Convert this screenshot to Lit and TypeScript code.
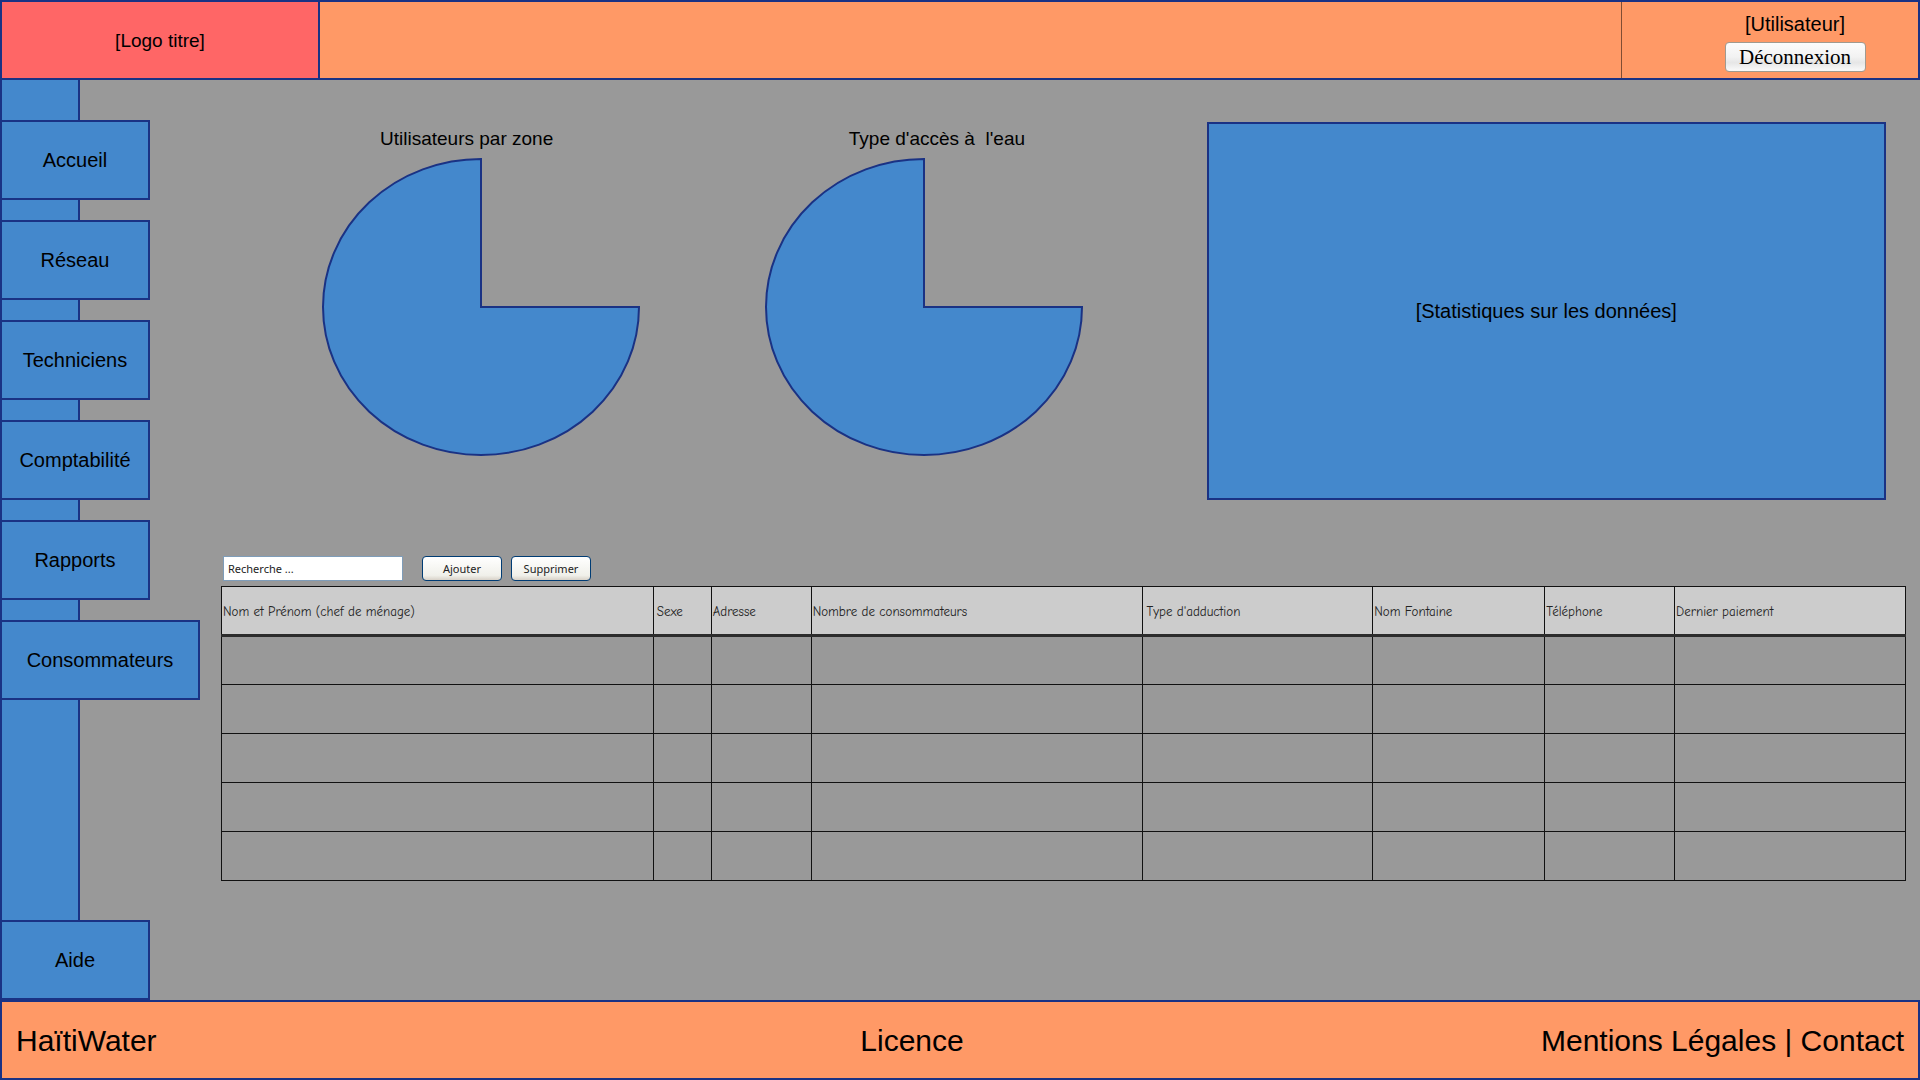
import { LitElement, html, css } from "lit";
import { customElement, property } from "lit/decorators.js";
import { classMap } from "lit/directives/class-map.js";

interface NavItem {
  label: string;
  active?: boolean;
  last?: boolean;
}

interface Column {
  label: string;
  width: number;
  inset?: boolean;
}

const NAV: NavItem[] = [
  { label: "Accueil" },
  { label: "Réseau" },
  { label: "Techniciens" },
  { label: "Comptabilité" },
  { label: "Rapports" },
  { label: "Consommateurs", active: true },
  { label: "Aide", last: true },
];

// Widths are relative weights of the columns.
const COLUMNS: Column[] = [
  { label: "Nom et Prénom (chef de ménage)", width: 432 },
  { label: "Sexe", width: 58, inset: true },
  { label: "Adresse", width: 100 },
  { label: "Nombre de consommateurs", width: 332 },
  { label: "Type d'adduction", width: 230, inset: true },
  { label: "Nom Fontaine", width: 172 },
  { label: "Téléphone", width: 130 },
  { label: "Dernier paiement", width: 231 },
];

const TOTAL_WIDTH = COLUMNS.reduce((sum, c) => sum + c.width, 0);
const EMPTY_ROWS = [1, 2, 3, 4, 5];

@customElement("pie-figure")
export class PieFigure extends LitElement {
  @property() label = "";

  static styles = css`
    :host {
      display: block;
    }
    .figure {
      margin: 0;
      display: flex;
      flex-direction: column;
      align-items: center;
      gap: 7px;
    }
    .caption {
      font-size: 19px;
      line-height: 24px;
      white-space: pre;
      padding: var(--caption-padding, 0);
    }
    .pie {
      display: block;
      width: 318px;
      height: 298px;
      fill: #4488cc;
      stroke: #1a3284;
      stroke-width: 2;
    }
  `;

  render() {
    return html`
      <figure class="figure">
        <figcaption class="caption">${this.label}</figcaption>
        <svg class="pie" viewBox="0 0 318 298" aria-hidden="true">
          <path d="M159 149V1A158 148 0 1 0 317 149Z" />
        </svg>
      </figure>
    `;
  }
}

@customElement("app-root")
export class AppRoot extends LitElement {
  static styles = css`
    :host {
      --navy: #1a3284;
      --blue: #4488cc;
      --orange: #ff9966;
      display: grid;
      grid-template-rows: 80px 1fr 80px;
      min-height: 100vh;
      box-sizing: border-box;
      background: #999999;
      color: #000;
      font-family: "Liberation Sans", Arial, sans-serif;
      font-size: 20px;
      line-height: 24px;
    }
    *,
    *::before {
      box-sizing: border-box;
    }
    a {
      color: inherit;
      text-decoration: none;
    }

    .header {
      display: grid;
      grid-template-columns: 320px 1fr 297px;
      background: var(--orange);
      border: 2px solid var(--navy);
      border-left: 0;
    }
    .logo {
      display: flex;
      align-items: center;
      justify-content: center;
      padding-top: 2px;
      background: #ff6666;
      border: solid var(--navy);
      border-width: 0 2px;
      font-size: 19px;
    }
    .user {
      grid-column: 3;
      display: flex;
      flex-direction: column;
      align-items: center;
      gap: 6px;
      padding: 10px 0 0 50px;
      border-left: 1px solid #804d33;
    }
    .logout {
      width: 141px;
      height: 30px;
      padding: 0;
      border: 1px solid #a09a90;
      border-radius: 4px;
      background: linear-gradient(#fcfcfc, #f2f2f2 50%, #e6e6e6 70%, #fafafa);
      color: #000;
      font: 21px/24px "Liberation Serif", "Times New Roman", serif;
    }

    .body {
      display: grid;
      grid-template-columns: 200px minmax(0, 1fr);
    }
    .sidebar {
      display: flex;
      flex-direction: column;
      align-items: flex-start;
      gap: 20px;
      padding-top: 40px;
      background: linear-gradient(
        to right,
        var(--navy) 2px,
        var(--blue) 2px 78px,
        var(--navy) 78px 80px,
        transparent 80px
      );
    }
    .nav-item {
      display: flex;
      align-items: center;
      justify-content: center;
      width: 150px;
      height: 80px;
      background: var(--blue);
      border: 2px solid var(--navy);
    }
    .nav-item.active {
      width: 200px;
    }
    .nav-item.last {
      margin-top: auto;
    }

    .main {
      padding: 42px 14px 40px 21px;
    }
    .charts {
      display: grid;
      grid-template-columns: 443fr 443fr 740fr;
      padding: 0 20px 0 38px;
    }
    .chart {
      padding-top: 5px;
    }
    .chart.zones {
      --caption-padding: 0 28px 0 0;
    }
    .chart.access {
      --caption-padding: 0 0 0 26px;
    }
    .stats {
      display: flex;
      align-items: center;
      justify-content: center;
      min-height: 378px;
      margin-left: 61px;
      background: var(--blue);
      border: 2px solid var(--navy);
    }

    .toolbar {
      display: flex;
      align-items: center;
      gap: 9px;
      margin: 56px 0 5px;
      padding-left: 2px;
      height: 25px;
    }
    .search,
    .tool {
      height: 25px;
      font: 11px/16px "Noto Sans", "Open Sans", sans-serif;
      color: #222;
    }
    .search {
      width: 180px;
      margin: 0 10px 0 0;
      padding: 0 4px;
      border: 1px solid #7f9db9;
      border-radius: 0;
      background: #fff;
    }
    .search::placeholder {
      color: #222;
      opacity: 1;
    }
    .tool {
      width: 80px;
      padding: 0;
      border: 1px solid #003c74;
      border-radius: 4px;
      background: linear-gradient(#ffffff, #f0f0ea 80%, #d8d2c8);
    }

    .table {
      width: 100%;
      table-layout: fixed;
      border-collapse: collapse;
      font: 13px/16px "Comic Sans MS", "Comic Neue", "Open Sans", sans-serif;
      color: #222;
    }
    .row {
      height: 49px;
    }
    .head {
      padding: 2px 0 0 1px;
      border: 1px solid #111;
      border-bottom: 3px solid #2c2c2c;
      background: #cccccc;
      font-weight: 400;
      text-align: left;
      white-space: nowrap;
    }
    .head.inset {
      padding-left: 3px;
    }
    .cell {
      padding: 0;
      border: 1px solid #111;
    }

    .footer {
      display: grid;
      grid-template-columns: 845fr auto 941fr;
      align-items: center;
      padding: 2px 14px 0;
      background: var(--orange);
      border: 2px solid var(--navy);
      font-size: 30px;
      line-height: 36px;
    }
    .legal {
      text-align: right;
      white-space: nowrap;
    }
  `;

  render() {
    return html`
      <header class="header">
        <div class="logo">[Logo titre]</div>
        <div class="user">
          <span>[Utilisateur]</span>
          <button class="logout" type="button">Déconnexion</button>
        </div>
      </header>

      <div class="body">
        <nav class="sidebar">
          ${NAV.map(
            (item) => html`<a
              href="#"
              class=${classMap({
                "nav-item": true,
                active: !!item.active,
                last: !!item.last,
              })}
              >${item.label}</a
            >`
          )}
        </nav>

        <main class="main">
          <section class="charts">
            <pie-figure class="chart zones" label="Utilisateurs par zone"></pie-figure>
            <pie-figure class="chart access" label="Type d'accès à  l'eau"></pie-figure>
            <div class="stats">[Statistiques sur les données]</div>
          </section>

          <div class="toolbar">
            <input class="search" type="search" placeholder="Recherche ..." aria-label="Recherche" />
            <button class="tool" type="button">Ajouter</button>
            <button class="tool" type="button">Supprimer</button>
          </div>

          <table class="table">
            <colgroup>
              ${COLUMNS.map(
                (c) => html`<col style="width:${(c.width / TOTAL_WIDTH) * 100}%" />`
              )}
            </colgroup>
            <thead>
              <tr class="row">
                ${COLUMNS.map(
                  (c) => html`<th
                    scope="col"
                    class=${classMap({ head: true, inset: !!c.inset })}
                  >${c.label}</th>`
                )}
              </tr>
            </thead>
            <tbody>
              ${EMPTY_ROWS.map(
                () => html`<tr class="row">
                  ${COLUMNS.map(() => html`<td class="cell"></td>`)}
                </tr>`
              )}
            </tbody>
          </table>
        </main>
      </div>

      <footer class="footer">
        <span>HaïtiWater</span>
        <a href="#">Licence</a>
        <span class="legal"><a href="#">Mentions Légales</a> | <a href="#">Contact</a></span>
      </footer>
    `;
  }
}
